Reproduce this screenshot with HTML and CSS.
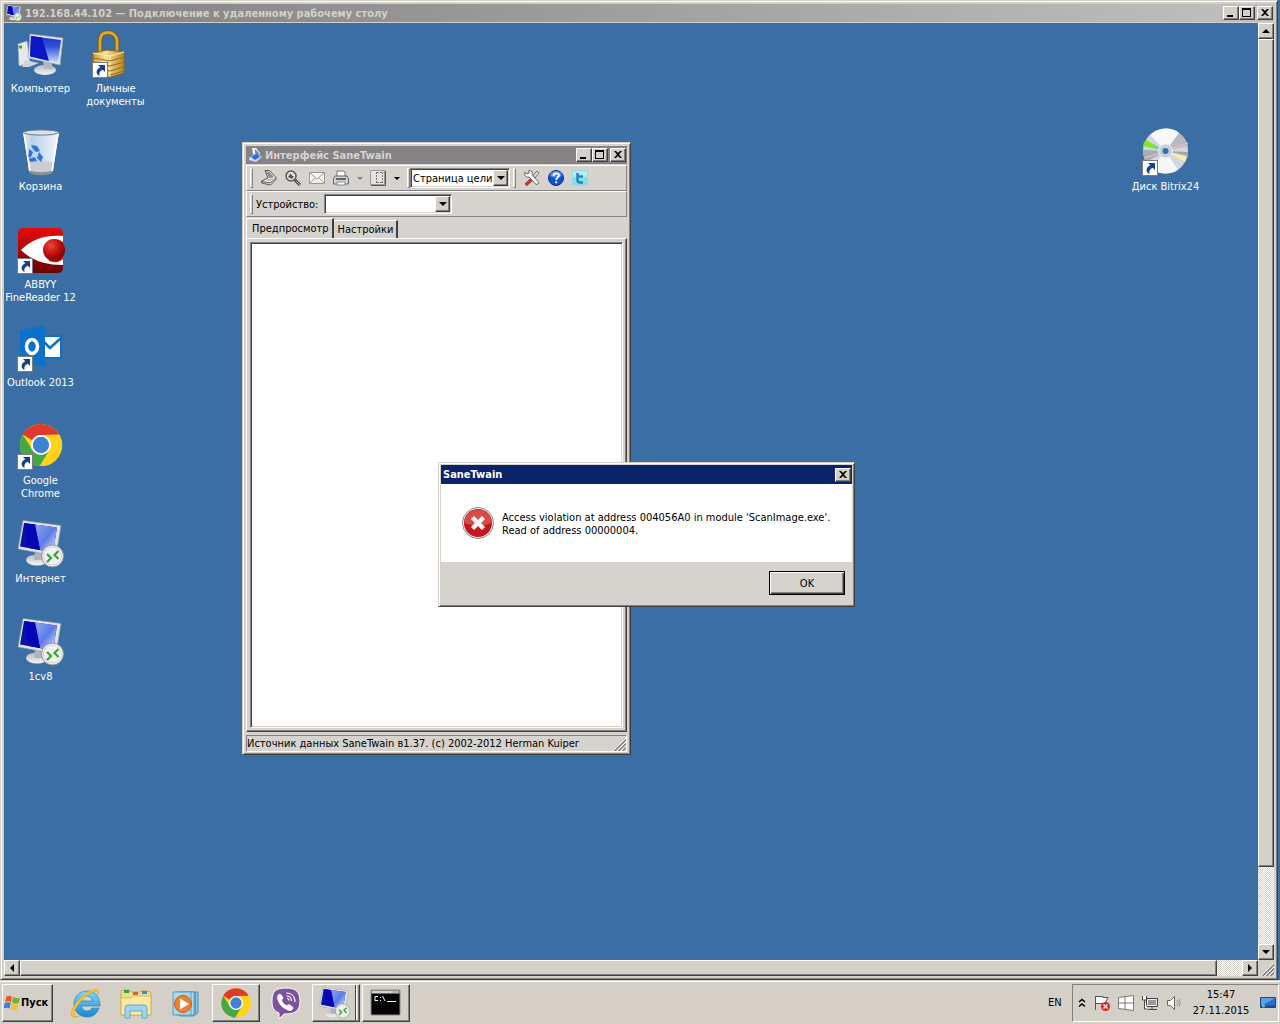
FILE: index.html
```
<!DOCTYPE html>
<html lang="ru">
<head>
    <meta charset="UTF-8">
    <meta name="viewport" content="width=device-width, initial-scale=1.0">
    <title>192.168.44.102 — Подключение к удаленному рабочему столу</title>
    <link rel="stylesheet" href="styles.css">
</head>
<body>
    <!-- shared drawings -->
    <svg class="defs" aria-hidden="true">
        <defs>
            <linearGradient id="screen" x1="0" y1="0" x2="1" y2="1">
                <stop offset="0" stop-color="#8ea6f4"/>
                <stop offset=".5" stop-color="#5d7be6"/>
                <stop offset="1" stop-color="#e6eeff"/>
            </linearGradient>
            <linearGradient id="screenV" x1="0" y1="1" x2="0" y2="0">
                <stop offset="0" stop-color="#c9d9fb"/>
                <stop offset=".6" stop-color="#2f52d8"/>
                <stop offset="1" stop-color="#1c36c8"/>
            </linearGradient>
            <linearGradient id="gold" x1="0" y1="0" x2="1" y2="0">
                <stop offset="0" stop-color="#c89a3a"/>
                <stop offset=".4" stop-color="#f7e29a"/>
                <stop offset="1" stop-color="#b8842a"/>
            </linearGradient>
            <linearGradient id="abbyy" x1="0" y1="0" x2="0" y2="1">
                <stop offset="0" stop-color="#e80a0a"/>
                <stop offset="1" stop-color="#6a0404"/>
            </linearGradient>
            <radialGradient id="ball" cx=".35" cy=".3" r=".8">
                <stop offset="0" stop-color="#ee4438"/>
                <stop offset=".5" stop-color="#c01010"/>
                <stop offset="1" stop-color="#6a0000"/>
            </radialGradient>
            <linearGradient id="bin" x1="0" y1="0" x2="1" y2="0">
                <stop offset="0" stop-color="#f2f7fc"/>
                <stop offset=".25" stop-color="#c0d8f0"/>
                <stop offset=".7" stop-color="#e6f1fb"/>
                <stop offset="1" stop-color="#ffffff"/>
            </linearGradient>
            <linearGradient id="stand" x1="0" y1="0" x2="0" y2="1">
                <stop offset="0" stop-color="#b8bcc0"/>
                <stop offset="1" stop-color="#f4f4f4"/>
            </linearGradient>
            <linearGradient id="ie" x1="0" y1="0" x2="0" y2="1">
                <stop offset="0" stop-color="#7fd8fa"/>
                <stop offset="1" stop-color="#1c86d0"/>
            </linearGradient>
            <symbol id="shortcut" viewBox="0 0 16 16">
                <rect x=".5" y=".5" width="15" height="15" fill="#fff" stroke="#7d7d7d"/>
                <path d="M6 3h7v7l-2.200-2.200c-3 1.200-3.800 3-3.300 6.200-3.500-1.500-4.500-6 .8-8.700z" fill="#15428b"/>
            </symbol>
            <symbol id="monitor" viewBox="0 0 48 48">
                <ellipse cx="20" cy="40" rx="11" ry="5.500" fill="url(#stand)"/>
                <path d="M18 30l8 2-1 8h-8z" fill="#aeb4ba"/>
                <path d="M6 .5L44 5.500 39 36 1 29z" fill="#e2e6ea" stroke="#8e99a5" stroke-width=".7"/>
                <path d="M7 3L40 7.500 36 32.500 3 26.500z" fill="#0a12a8"/>
                <path d="M18 4.500L40 7.500 36 32.500 23 30z" fill="url(#screen)"/>
                <path d="M7 3l11 1.500L23 30l-10-1.800L9 15z" fill="#0606b8"/>
            </symbol>
            <symbol id="rdp" viewBox="0 0 48 48">
                <use href="#monitor" width="48" height="48"/>
                <circle cx="35.500" cy="36" r="11" fill="#f1f1f1" stroke="#8e9296"/>
                <circle cx="35.500" cy="36" r="9" fill="none" stroke="#d5d5d5"/>
                <path d="M30 34l4 4-4 4M41.500 31l-4 4 4 4" fill="none" stroke="#3aa52d" stroke-width="2.200"/>
            </symbol>
            <symbol id="chrome" viewBox="0 0 48 48">
                <circle cx="24" cy="24" r="22" fill="#ffd21c"/>
                <path d="M4.900 13A22 22 0 0 1 43 13L24 13.500a10.500 10.500 0 0 0-9.300 5.500z" fill="#de3a2e"/>
                <path d="M4.900 13A22 22 0 0 0 22.500 46L33 29.500 24 34.500l-9.100-5.200z" fill="#45a848"/>
                <path d="M24 13.500h19.300A22 22 0 0 1 23 46l10.100-16.700z" fill="#ffd21c"/>
                <circle cx="24" cy="24" r="10.500" fill="#fff"/>
                <circle cx="24" cy="24" r="8.500" fill="#3f82d2"/>
            </symbol>
            <symbol id="grip" viewBox="0 0 14 14">
                <path d="M2 14L14 2M6 14l8-8M10 14l4-4" stroke="#808080" stroke-width="2"/>
                <path d="M1 14L14 1M5 14l9-9M9 14l5-5" stroke="#fff"/>
            </symbol>
            <symbol id="min" viewBox="0 0 12 10"><path d="M2 7h6v2H2z"/></symbol>
            <symbol id="max" viewBox="0 0 12 10"><path d="M1 0h9v9H1zM2 2v6h7V2z" fill-rule="evenodd"/></symbol>
            <symbol id="close" viewBox="0 0 12 10"><path d="M2 1h2l2 2 2-2h2L7 4.500 10 8H8L6 6 4 8H2l3-3.500z"/></symbol>
        </defs>
    </svg>

    <main class="remote frame">
        <header class="titlebar titlebar-remote">
            <svg class="title-icon" viewBox="0 0 48 48"><use href="#rdp"/></svg>
            <h1 class="title">192.168.44.102 — Подключение к удаленному рабочему столу</h1>
            <div class="title-btns">
                <button class="sys-btn" aria-label="Свернуть"><svg><use href="#min"/></svg></button>
                <button class="sys-btn" aria-label="Развернуть"><svg><use href="#max"/></svg></button>
                <button class="sys-btn sys-close" aria-label="Закрыть"><svg><use href="#close"/></svg></button>
            </div>
        </header>

        <div class="viewport">
            <section class="desktop">
                <div class="icons">
                    <a href="#" class="icon">
                        <svg class="icon-img" viewBox="0 0 48 48">
                            <path d="M1 14l9-3 3 22-11 3z" fill="#e6e8ea" stroke="#a0a8b0" stroke-width=".6"/>
                            <path d="M8 30l14 3-10 4H5z" fill="#cfd4d8"/>
                            <circle cx="3.500" cy="17" r="1.800" fill="#34b22c"/>
                            <ellipse cx="28" cy="40" rx="11" ry="5" fill="url(#stand)"/>
                            <path d="M26 30h8l2 9h-9z" fill="#b4b9be"/>
                            <path d="M13 4l33 4-3 27-32-7z" fill="#e2e6ea" stroke="#9aa4ae" stroke-width=".7"/>
                            <path d="M14 6l30 4-3 22.500L13 26.500z" fill="url(#screenV)"/>
                            <path d="M14 6l11 1.500L32 31l-19-4.500z" fill="#0b16c4"/>
                        </svg>
                        <span class="icon-name">Компьютер</span>
                    </a>
                    <a href="#" class="icon">
                        <svg class="icon-img" viewBox="0 0 48 48">
                            <path d="M8 24V12C8 5 11 2.500 15.500 2.500S25 5 25 12v12" fill="none" stroke="#7a5812" stroke-width="4.500"/>
                            <path d="M8 24V12C8 5 11 2.500 15.500 2.500S25 5 25 12v12" fill="none" stroke="#dcaa30" stroke-width="2.800"/>
                            <path d="M1 23l14-3 17 2v21l-14 4-17-3z" fill="url(#gold)" stroke="#94680f"/>
                            <path d="M1 23l17 3 14-4M18 26v21" fill="none" stroke="#fff1b8"/>
                            <path d="M1 28l17 3 14-4M1 33l17 3 14-4M1 38l17 3 14-4M18 45l14-4" fill="none" stroke="#9a6d14" stroke-width="1.200"/>
                            <use href="#shortcut" y="32" width="16" height="16"/>
                        </svg>
                        <span class="icon-name">Личные документы</span>
                    </a>
                    <a href="#" class="icon">
                        <svg class="icon-img" viewBox="0 0 48 48">
                            <path d="M6 4h36l-6 39c-4 4-20 4-24 0z" fill="url(#bin)" opacity=".93"/>
                            <path d="M11 36c6-5 19-5 26 0l-1 7c-4 4-20 4-24 0z" fill="#c9ced2"/>
                            <path d="M12 42c6 3 18 3 24 0l-.5 3c-5 3-18 3-23 0z" fill="#8a9095"/>
                            <ellipse cx="24" cy="4.500" rx="17.500" ry="2.600" fill="#d6e3ef" stroke="#6f7a84"/>
                            <path d="M14 17l6 1 3 5-4 1-3-3zM12 21l4 3-2 5-3 1zM11 31l7-2 2 4-6 1zM22 24l4 5-2 5-4-4z" fill="#2f74d6"/>
                            <path d="M7 6l6 37M41 6l-6 37" stroke="#fff" stroke-width="1.500"/>
                        </svg>
                        <span class="icon-name">Корзина</span>
                    </a>
                    <a href="#" class="icon">
                        <svg class="icon-img" viewBox="0 0 48 48">
                            <rect x="1" y="2" width="45" height="45" rx="5" fill="url(#abbyy)"/>
                            <path d="M4 24C15 13 29 9 46 10v29C29 39 15 35 4 24z" fill="#fff"/>
                            <path d="M32 14q9-2 14 2v17q-5 5-14 2z" fill="#d80d0d"/>
                            <path d="M32 13q-8 3-8 11t8 11z" fill="#fff"/>
                            <circle cx="37" cy="24" r="11" fill="url(#ball)"/>
                            <use href="#shortcut" y="32" width="16" height="16"/>
                        </svg>
                        <span class="icon-name">ABBYY FineReader 12</span>
                    </a>
                    <a href="#" class="icon">
                        <svg class="icon-img" viewBox="0 0 48 48">
                            <rect x="22" y="11" width="23" height="24" rx="2" fill="#0a72c8"/>
                            <path d="M27 13h16v20H27z" fill="#fff"/>
                            <path d="M27 18l6 6 11-10" fill="none" stroke="#0a72c8" stroke-width="2.500"/>
                            <path d="M3 6l25-4v41L3 39z" fill="#0a72c8"/>
                            <ellipse cx="15" cy="22.500" rx="5.500" ry="7" fill="none" stroke="#fff" stroke-width="3.500"/>
                            <use href="#shortcut" y="32" width="16" height="16"/>
                        </svg>
                        <span class="icon-name">Outlook 2013</span>
                    </a>
                    <a href="#" class="icon">
                        <svg class="icon-img" viewBox="0 0 48 48">
                            <use href="#chrome" x="1" width="46" height="46"/>
                            <use href="#shortcut" y="32" width="16" height="16"/>
                        </svg>
                        <span class="icon-name">Google Chrome</span>
                    </a>
                    <a href="#" class="icon">
                        <svg class="icon-img" viewBox="0 0 48 48"><use href="#rdp"/></svg>
                        <span class="icon-name">Интернет</span>
                    </a>
                    <a href="#" class="icon">
                        <svg class="icon-img" viewBox="0 0 48 48"><use href="#rdp"/></svg>
                        <span class="icon-name">1cv8</span>
                    </a>
                    <a href="#" class="icon icon-disk">
                        <svg class="icon-img" viewBox="0 0 48 48">
                            <circle cx="23.500" cy="23" r="22.500" fill="#d4d6d9"/>
                            <path d="M23.500 23L8 7Q15 .5 24 .5T37 5z" fill="#f8f8fa"/>
                            <path d="M23.500 23L36 42Q30 46 22 45.500T9 41z" fill="#f6f6f8"/>
                            <path d="M23.500 23L37 5q7 5 9 13z" fill="#b9babf"/>
                            <path d="M23.500 23L1 22q0 7 3 12z" fill="#a9abb0"/>
                            <path d="M23.500 23L46 24q0 5-1 7z" fill="#a4a5aa"/>
                            <path d="M23.500 23L4 12q-3 3-3 6z" fill="#7dea1e"/>
                            <path d="M23.500 23L12 16.500l-1 3z" fill="#6dc6c6"/>
                            <path d="M23.500 23l21.500 5-2 6z" fill="#f4eeb0"/>
                            <path d="M23.500 23L46 15M23.500 23L3 30" stroke="#e3c2dc" stroke-width="1.200"/>
                            <circle cx="23.500" cy="23" r="7" fill="#c3d0de" stroke="#eef2f5"/>
                            <circle cx="23.500" cy="23" r="3" fill="#3a6ea5"/>
                            <use href="#shortcut" y="32" width="16" height="16"/>
                        </svg>
                        <span class="icon-name">Диск Bitrix24</span>
                    </a>
                </div>

                <section class="window frame">
                    <header class="titlebar">
                        <svg class="title-icon" viewBox="0 0 16 16">
                            <path d="M4 1h4l4 5-2 4-5-3z" fill="#f2f4f8"/>
                            <path d="M7 2l4 4-1 3-3-2z" fill="#7d8aa0"/>
                            <path d="M1 11l7-5 6 4-6 5-7-2z" fill="#c9dcfa"/>
                            <path d="M3 10l6-4 3 4-5 3z" fill="#2f6ee0"/>
                        </svg>
                        <h2 class="title">Интерфейс SaneTwain</h2>
                        <div class="title-btns">
                            <button class="sys-btn" aria-label="Свернуть"><svg><use href="#min"/></svg></button>
                            <button class="sys-btn" aria-label="Развернуть"><svg><use href="#max"/></svg></button>
                            <button class="sys-btn sys-close" aria-label="Закрыть"><svg><use href="#close"/></svg></button>
                        </div>
                    </header>
                    <div class="toolbars">
                        <div class="toolbar">
                            <span class="handle"></span>
                            <button class="tool" aria-label="Сканировать">
                                <svg viewBox="0 0 16 16">
                                    <path d="M4 .5h4.500l6.500 7v2L9.500 15 .5 13v-2L7 8z" fill="#e9e9e9" stroke="#555"/>
                                    <path d="M5 1.500h3l5 6-5 .5z" fill="#8c8c8c"/>
                                    <path d="M1 11.500l8 1.500 6-5" fill="none" stroke="#555"/>
                                    <path d="M5 10l4-1.500 3 .5-3.500 2.500z" fill="#bbb"/>
                                </svg>
                            </button>
                            <button class="tool" aria-label="Просмотр">
                                <svg viewBox="0 0 16 16">
                                    <circle cx="6" cy="6" r="5" fill="#ddd" stroke="#555" stroke-width="1.500"/>
                                    <path d="M3 7l3-4 3 3-2 3z" fill="#555"/>
                                    <path d="M6 2l1 3 3 1" stroke="#fff" fill="none"/>
                                    <path d="M10 10l5 5" stroke="#444" stroke-width="3"/>
                                    <path d="M11 11l4 4" stroke="#bbb"/>
                                </svg>
                            </button>
                            <button class="tool" aria-label="Отправить">
                                <svg viewBox="0 0 16 16">
                                    <path d="M.5 2.500h15v11H.5z" fill="#f3f3f3" stroke="#999"/>
                                    <path d="M1 3l7 6 7-6M1 13l5-5M15 13l-5-5" fill="none" stroke="#999"/>
                                </svg>
                            </button>
                            <button class="tool" aria-label="Печать">
                                <svg viewBox="0 0 16 16">
                                    <path d="M4 7V1h7l1 2v4z" fill="#fff" stroke="#777"/>
                                    <path d="M2 6h12l1.500 3v5H.5V9z" fill="#d2d2d2" stroke="#666"/>
                                    <path d="M3 8h10v2H3z" fill="#666"/>
                                    <path d="M4 12h8v3H4z" fill="#fff" stroke="#888"/>
                                </svg>
                            </button>
                            <button class="drop" aria-label="Параметры печати"><span class="tri tri-down tri-off"></span></button>
                            <button class="tool" aria-label="Формат страницы">
                                <svg viewBox="0 0 16 16">
                                    <path d="M.5.500h14v14H.5z" fill="#e6e4e0" stroke="#999"/>
                                    <path d="M1 15.500h14.500V1" fill="none" stroke="#555"/>
                                    <path d="M6.500 2v11M12.500 2v11M7 2.500h5M7 12.500h5" fill="none" stroke="#777" stroke-dasharray="2 1"/>
                                </svg>
                            </button>
                            <button class="drop" aria-label="Выбор формата"><span class="tri tri-down"></span></button>
                            <span class="handle"></span>
                            <div class="combo combo-page">
                                <select aria-label="Масштаб"><option>Страница целиком</option></select>
                                <span class="combo-btn"><span class="tri tri-down"></span></span>
                            </div>
                            <span class="handle"></span>
                            <button class="tool" aria-label="Настройка">
                                <svg viewBox="0 0 16 16">
                                    <path d="M13 1l2 2-6 7-2-2z" fill="#ddd" stroke="#555" stroke-width=".8"/>
                                    <path d="M1 14l6-6 2 2-6 5.500z" fill="#d23a2e" stroke="#7c201a" stroke-width=".8"/>
                                    <path d="M1 2l2 2 2-1V.500c3 0 4 2 3 4l6 7c2 2-1 4-3 2L5 7C2 8 0 6 1 2z" fill="#f6f6f6" stroke="#555" stroke-width=".9"/>
                                </svg>
                            </button>
                            <button class="tool" aria-label="Справка">
                                <svg viewBox="0 0 16 16">
                                    <circle cx="8" cy="8" r="7.500" fill="#1450cc" stroke="#0a2f90"/>
                                    <path d="M2 6a6 5 0 0 1 12 0q-6 3-12 0z" fill="#5b8eea"/>
                                    <path d="M5.500 6c0-3.500 5.500-3.500 5.500-.5C11 7.500 8.200 7.500 8.200 10M8.200 11.200v2" fill="none" stroke="#fff" stroke-width="1.800"/>
                                </svg>
                            </button>
                            <button class="tool" aria-label="Twitter">
                                <svg viewBox="0 0 16 16">
                                    <rect width="16" height="16" rx="2" fill="#8cdcf0"/>
                                    <rect x="1" y="1" width="14" height="6" rx="1" fill="#b4ecf8"/>
                                    <path d="M5.500 3v7q0 2.500 2.500 2.500h3M5.500 6.500H11" fill="none" stroke="#2388b4" stroke-width="2.600"/>
                                </svg>
                            </button>
                        </div>
                        <div class="toolbar">
                            <span class="handle"></span>
                            <label for="device">Устройство:</label>
                            <div class="combo combo-device">
                                <select id="device"><option></option></select>
                                <span class="combo-btn"><span class="tri tri-down"></span></span>
                            </div>
                        </div>
                    </div>
                    <div class="tabs">
                        <button class="tab tab-active">Предпросмотр</button>
                        <button class="tab">Настройки</button>
                    </div>
                    <div class="page">
                        <div class="preview"></div>
                    </div>
                    <footer class="status">
                        <span>Источник данных SaneTwain в1.37. (c) 2002-2012 Herman Kuiper</span>
                        <svg class="grip"><use href="#grip"/></svg>
                    </footer>
                </section>

                <section class="dialog frame" role="alertdialog" aria-labelledby="dialog-title">
                    <header class="titlebar titlebar-active">
                        <h2 class="title" id="dialog-title">SaneTwain</h2>
                        <button class="sys-btn" aria-label="Закрыть"><svg><use href="#close"/></svg></button>
                    </header>
                    <div class="message">
                        <svg class="error-icon" viewBox="0 0 32 32">
                            <circle cx="16" cy="16" r="15.500" fill="#f4f4f4" stroke="#8c8c8c"/>
                            <circle cx="16" cy="16" r="14" fill="#c4161c"/>
                            <path d="M2.500 16a13.500 13.500 0 0 1 27 0q-13 5-27 0z" fill="#d94a4a"/>
                            <path d="M10.500 10.500l11 11M21.500 10.500l-11 11" stroke="#f4f4f4" stroke-width="4.500"/>
                        </svg>
                        <p>Access violation at address 004056A0 in module 'ScanImage.exe'.<br>Read of address 00000004.</p>
                    </div>
                    <div class="dialog-btns">
                        <button class="ok-btn">OK</button>
                    </div>
                </section>
            </section>

            <div class="scroll scroll-v">
                <button class="scroll-btn" aria-label="Вверх"><span class="tri tri-up"></span></button>
                <div class="track"><div class="thumb"></div></div>
                <button class="scroll-btn" aria-label="Вниз"><span class="tri tri-down"></span></button>
            </div>
            <div class="scroll scroll-h">
                <button class="scroll-btn" aria-label="Влево"><span class="tri tri-left"></span></button>
                <div class="track"><div class="thumb"></div></div>
                <button class="scroll-btn" aria-label="Вправо"><span class="tri tri-right"></span></button>
            </div>
            <div class="corner"><svg class="grip"><use href="#grip"/></svg></div>
        </div>
    </main>

    <nav class="taskbar">
        <button class="start">
            <svg viewBox="0 0 16 16">
                <path d="M2.500 1.500Q5 0 8 1.500L7 7Q4 5.500 1 7z" fill="#e8562a"/>
                <path d="M9 2q3.500 2 7 .5L14.500 8Q11 9.500 8 7.500z" fill="#6fb52c"/>
                <path d="M.8 8Q4 6.500 6.800 8L5.500 13.500Q3 12-.5 13.500z" fill="#3b7fd6"/>
                <path d="M7.800 8.500q3.200 2 6.500.5l-1.300 5.500q-3.500 1.500-6.500-.5z" fill="#f6c22c"/>
            </svg>
            Пуск
        </button>
        <div class="tasks">
            <button class="task" aria-label="Internet Explorer">
                <svg viewBox="0 0 32 32">
                    <path d="M17 4C9 4 4 10 4 17s5 13 13 13c6 0 10-3 12-9h-7c-1 2-3 3-5 3-3 0-5-2-5.500-5H30C30 9 25 4 17 4zM11.500 14c.5-3 2.500-5 5.500-5s5 2 5.500 5z" fill="url(#ie)" stroke="#1a78c0" stroke-width=".6"/>
                    <path d="M28 7c2-6-3-6-10-2C8 11-1 24 2 29c1 2 4 2 7 0-3 1-5 0-5-2 0-5 7-15 15-20 5-3 9-4 9 0z" fill="#f6c62c" stroke="#d89a14" stroke-width=".5"/>
                </svg>
            </button>
            <button class="task" aria-label="Проводник">
                <svg viewBox="0 0 32 32">
                    <path d="M1 5q0-2 2-2h6l2 2h9l1-1h7q3 0 3 3v21H1z" fill="#f1dc8c" stroke="#c9a645"/>
                    <path d="M4 3h5v3H4z" fill="#3aa03c"/><path d="M13 5h5v3h-5z" fill="#c8663c"/><path d="M22 4h5v3h-5z" fill="#3c8cc8"/>
                    <path d="M1 11h10l2-2h18v19H1z" fill="#faeaa6" stroke="#d8b95c"/>
                    <path d="M5 31V21q0-3 3-3h16q3 0 3 3v10h-5v-7H10v7z" fill="#a3d6ee" stroke="#5ba8cc"/>
                </svg>
            </button>
            <button class="task" aria-label="Проигрыватель">
                <svg viewBox="0 0 32 32">
                    <path d="M10 5h18v21l-4 3H10z" fill="#8fc6e2" stroke="#4b94bc"/>
                    <path d="M6 5h18v23H6zM25.500 5v22" fill="#b3ddf0" stroke="#4b94bc"/>
                    <path d="M3 5h18v23H3z" fill="#a9d8ee" stroke="#5a9fc4"/>
                    <circle cx="13" cy="17" r="8.500" fill="#f0812a" stroke="#c35c12"/>
                    <path d="M10 11.500l9 5.500-9 5.500z" fill="#fff"/>
                </svg>
            </button>
            <button class="task task-open" aria-label="Google Chrome"><svg viewBox="0 0 48 48"><use href="#chrome"/></svg></button>
            <button class="task" aria-label="Viber">
                <svg viewBox="0 0 32 32">
                    <path d="M16 1C6 1 2 4 2 14c0 7 2 10 7 12v6l5-5h2c10 0 14-4 14-13S26 1 16 1z" fill="#7c529e" stroke="#fff"/>
                    <path d="M9 7c-3 2-2 5 0 9s7 7 11 8c2 0 4-3 3-4l-4-3c-1 0-2 2-3 1-2-1-4-3-4-5 0-1 2-1 1-3-1-1-2-4-4-3z" fill="#fff"/>
                    <path d="M16 6c5 0 9 3 9 9M16.500 9c3 0 5 2 5 5M17 11.500q2 0 2 2" fill="none" stroke="#fff" stroke-width="1.200"/>
                </svg>
            </button>
            <button class="task task-open task-stack" aria-label="Удаленный рабочий стол"><svg viewBox="0 0 48 48"><use href="#rdp"/></svg></button>
            <button class="task task-open" aria-label="Командная строка">
                <svg viewBox="0 0 32 32">
                    <path d="M1 3h29v25H1z" fill="#050505" stroke="#888"/>
                    <path d="M1.500 3.500h28v3h-28z" fill="#cfd3d6"/>
                    <path d="M23 5h1M25.500 5h1M28 5h1" stroke="#444"/>
                    <path d="M8 9.500H5v4h3M10.500 10v1M10.500 13v1M12.500 9l2.500 5M17 14.500h9" fill="none" stroke="#fff"/>
                </svg>
            </button>
        </div>
        <span class="lang">EN</span>
        <div class="tray">
            <button class="tray-btn tray-more" aria-label="Показать скрытые значки">
                <svg viewBox="0 0 8 10"><path d="M1 4l3-2.500L7 4M1 8.500L4 6l3 2.500" fill="none" stroke="#000" stroke-width="1.500"/></svg>
            </button>
            <button class="tray-btn" aria-label="Центр поддержки">
                <svg viewBox="0 0 16 16">
                    <path d="M1.500 1v14M2 1.500h7v1h5l-2 3.500 2 3.500H8v-1H2" fill="#fafafa" stroke="#555"/>
                    <circle cx="11.500" cy="11.500" r="4.500" fill="#d62a22"/>
                    <path d="M9.500 9.500l4 4M13.500 9.500l-4 4" stroke="#fff" stroke-width="1.300"/>
                </svg>
            </button>
            <button class="tray-btn" aria-label="Windows">
                <svg viewBox="0 0 16 16">
                    <path d="M.5 2.500l15-2v15l-15-2z" fill="#fff" stroke="#777"/>
                    <path d="M7 1.500v13M.5 8h15" stroke="#777"/>
                </svg>
            </button>
            <button class="tray-btn" aria-label="Сеть">
                <svg viewBox="0 0 16 16">
                    <path d="M4.500 3.500h11v8h-11z" fill="#999" stroke="#444"/>
                    <path d="M5.500 4.500h9v6h-9z" fill="none" stroke="#eee"/>
                    <path d="M6 14.500h9M10 12v2" stroke="#444"/>
                    <path d="M.5 1v4h4V1M2.500 5v9h3" fill="#fff" stroke="#444"/>
                </svg>
            </button>
            <button class="tray-btn" aria-label="Громкость">
                <svg viewBox="0 0 16 16">
                    <path d="M1.500 5.500h3l4-4v13l-4-4h-3z" fill="#fff" stroke="#666"/>
                    <path d="M11 5q2 3 0 6M13 4q2.500 4 0 8" fill="none" stroke="#999"/>
                </svg>
            </button>
            <time class="clock" datetime="2015-11-27T15:47">15:47<br>27.11.2015</time>
            <button class="tray-btn" aria-label="Свернуть все окна">
                <svg viewBox="0 0 16 16">
                    <path d="M.5 2.500h15v10H.5z" fill="#2a6fd0" stroke="#24466e"/>
                    <path d="M1 3h14L1 11z" fill="#5f9fe8"/>
                    <path d="M1 10.500h14v2H1z" fill="#234a80"/>
                    <circle cx="3.500" cy="11" r="1.500" fill="#62c8d8"/>
                </svg>
            </button>
        </div>
    </nav>
</body>
</html>
```
FILE: styles.css
```
*{
    padding: 0;
    margin: 0;
    box-sizing: border-box;
}
body{
    display: flex;
    flex-direction: column;
    height: 100vh;
    overflow: hidden;
    background: #3a6ea5;
    color: #000;
    font: 11px/13px Tahoma, "DejaVu Sans Condensed", "DejaVu Sans", sans-serif;
}
button, select{
    font: inherit;
    color: inherit;
    border: 0;
    background: none;
    border-radius: 0;
    appearance: none;
}
svg{
    display: block;
}
.defs{
    position: absolute;
    width: 0;
    height: 0;
}

/* window frame */
.frame{
    display: flex;
    flex-direction: column;
    background: #d6d3ce;
    border: 1px solid #404040;
    border-top-color: #d4d0c8;
    border-left-color: #d4d0c8;
    box-shadow: inset 1px 1px #fff, inset -1px -1px #808080;
    padding: 3px;
}
.titlebar{
    display: flex;
    align-items: center;
    height: 18px;
    flex: none;
    padding: 0 1px 0 2px;
    gap: 1px;
    background: #848284;
    color: #d6d3ce;
}
.titlebar-remote{
    gap: 3px;
    background: linear-gradient(to right, #808080, #c0c0c0);
    color: #d4d0c8;
}
.titlebar-active{
    background: #0a246a;
    color: #fff;
}
.title{
    flex: 1;
    font-size: 11px;
    font-weight: bold;
    white-space: nowrap;
}
.title-icon{
    width: 16px;
    height: 16px;
}
.title-btns{
    display: flex;
}
.sys-btn, .scroll-btn, .combo-btn{
    display: flex;
    align-items: center;
    justify-content: center;
    background: #d4d0c8;
    border: 1px solid #404040;
    border-top-color: #fff;
    border-left-color: #fff;
    box-shadow: inset -1px -1px #808080;
}
.sys-btn{
    width: 16px;
    height: 14px;
}
.sys-btn svg{
    width: 12px;
    height: 10px;
}
.sys-close{
    margin-left: 2px;
}

/* remote desktop window */
.remote{
    flex: 1;
    min-height: 0;
    margin-right: 2px;
    background: #d4d0c8;
}
.viewport{
    flex: 1;
    min-height: 0;
    display: grid;
    grid-template-rows: 1fr 16px;
    grid-template-columns: 1fr 16px;
    padding-top: 1px;
}
.desktop{
    position: relative;
    overflow: hidden;
    min-height: 0;
    background: #3a6ea5;
}
.icons{
    display: grid;
    grid-template-columns: repeat(16, 75px);
    grid-template-rows: repeat(7, 98px);
    grid-auto-flow: column;
    padding-top: 7px;
    margin-left: -1px;
}
.icon{
    display: flex;
    flex-direction: column;
    align-items: center;
    gap: 4px;
    grid-column: 1;
    color: #fff;
    text-align: center;
    text-decoration: none;
}
.icon:nth-child(2){
    grid-column: 2;
    grid-row: 1;
}
.icon-disk{
    grid-column: 16;
    grid-row: 2;
}
.icon-img{
    width: 48px;
    height: 48px;
}

/* scroll bars */
.scroll{
    display: flex;
}
.scroll-v{
    flex-direction: column;
}
.scroll-btn{
    width: 16px;
    height: 16px;
    flex: none;
}
.track{
    flex: 1;
    background: repeating-conic-gradient(#fff 0 25%, #d4d0c8 0 50%) 0 0 / 2px 2px;
}
.thumb{
    background: #d4d0c8;
    border: 1px solid #404040;
    border-top-color: #fff;
    border-left-color: #fff;
    box-shadow: inset -1px -1px #808080;
}
.scroll-v .thumb{
    height: calc(100% - 77px);
}
.scroll-h .thumb{
    width: calc(100% - 25px);
    height: 100%;
}
.corner{
    display: flex;
    align-items: flex-end;
    justify-content: flex-end;
}
.grip{
    width: 14px;
    height: 14px;
}
.tri{
    border: 3px solid transparent;
}
.tri-up{
    border-top: 0;
    border-bottom: 4px solid #000;
    border-left-width: 4px;
    border-right-width: 4px;
}
.tri-down{
    border-bottom: 0;
    border-top: 4px solid #000;
    border-left-width: 4px;
    border-right-width: 4px;
}
.tri-left{
    border-left: 0;
    border-right: 4px solid #000;
    border-top-width: 4px;
    border-bottom-width: 4px;
}
.tri-right{
    border-right: 0;
    border-left: 4px solid #000;
    border-top-width: 4px;
    border-bottom-width: 4px;
}
.tri-off{
    border-top-color: #848284;
}

/* SaneTwain */
.window{
    position: absolute;
    left: 238px;
    top: 119px;
    width: 389px;
    height: 613px;
    padding-bottom: 2px;
}
.toolbars{
    margin-top: 1px;
}
.toolbar{
    display: flex;
    align-items: center;
    height: 26px;
    padding-left: 3px;
    border: 1px solid #848284;
    border-left-color: #fff;
    border-top-color: #fff;
}
.handle{
    width: 3px;
    height: 20px;
    border: 1px solid #848284;
    border-top-color: #fff;
    border-left-color: #fff;
}
.tool{
    display: flex;
    align-items: center;
    justify-content: center;
    width: 24px;
    height: 22px;
}
.tool svg{
    width: 16px;
    height: 16px;
}
.handle + .tool{
    margin-left: 4px;
}
.drop{
    display: flex;
    justify-content: center;
    width: 13px;
}
.drop .tri{
    border-width: 3px 3px 0;
}
.drop + .handle{
    margin-left: 4px;
}
.combo{
    display: flex;
    height: 20px;
    padding: 1px;
    background: #fff;
    border: 1px solid #fff;
    border-top-color: #848284;
    border-left-color: #848284;
    box-shadow: inset 1px 1px #404040, inset -1px -1px #d6d3ce;
}
.combo select{
    flex: 1;
    min-width: 0;
    padding-left: 1px;
    overflow: hidden;
    text-overflow: clip;
}
.combo-btn{
    width: 15px;
}
.combo-page{
    width: 100px;
    margin-right: 3px;
}
.combo-device{
    width: 128px;
}
.toolbar label{
    width: 71px;
    padding-left: 3px;
    white-space: nowrap;
}
.tabs{
    display: flex;
    align-items: flex-end;
    height: 21px;
    padding-top: 1px;
}
.tab{
    height: 18px;
    padding: 0 3px;
    border-top: 1px solid #fff;
    border-right: 2px solid #404040;
    white-space: nowrap;
}
.tab-active{
    height: 20px;
    padding: 0 4px 1px 5px;
    border-left: 1px solid #fff;
    border-right: 2px solid #404040;
}
.page{
    flex: 1;
    display: flex;
    padding: 3px;
    border: 1px solid #404040;
    border-top-color: #fff;
    border-left-color: #fff;
    box-shadow: inset -1px -1px #848284;
}
.preview{
    flex: 1;
    background: #fff;
    border: 1px solid #fff;
    border-top-color: #848284;
    border-left-color: #848284;
    box-shadow: inset 1px 1px #404040, inset -1px -1px #d6d3ce;
}
.status{
    display: flex;
    align-items: center;
    justify-content: space-between;
    height: 17px;
    margin-top: 3px;
    white-space: nowrap;
    border: 1px solid #fff;
    border-top-color: #848284;
    border-left-color: #848284;
}

/* error message */
.dialog{
    position: absolute;
    left: 434px;
    top: 439px;
    width: 417px;
    height: 145px;
    padding: 2px;
}
.dialog .titlebar{
    height: 19px;
}
.message{
    flex: 1;
    display: flex;
    gap: 8px;
    padding: 23px 21px;
    background: #fff;
}
.message p{
    padding-top: 4px;
    white-space: nowrap;
}
.error-icon{
    width: 32px;
    height: 32px;
    flex: none;
}
.dialog-btns{
    display: flex;
    justify-content: flex-end;
    padding: 9px 7px;
}
.ok-btn{
    width: 76px;
    height: 24px;
    border: 1px solid #000;
    box-shadow: inset 1px 1px #fff, inset -1px -1px #404040, inset -2px -2px #848284;
}

/* taskbar */
.taskbar{
    display: flex;
    align-items: center;
    height: 44px;
    flex: none;
    padding: 2px 1px 2px 2px;
    background: #d4d0c8;
    border-top: 1px solid #d4d0c8;
    box-shadow: inset 0 1px #fff;
}
.start, .task-open{
    border: 1px solid #404040;
    border-top-color: #fff;
    border-left-color: #fff;
    box-shadow: inset -1px -1px #808080;
}
.start{
    display: flex;
    align-items: center;
    gap: 1px;
    width: 51px;
    height: 38px;
    padding-left: 1px;
    font-weight: bold;
}
.start svg{
    width: 16px;
    height: 16px;
    flex: none;
}
.tasks{
    flex: 1;
    display: flex;
    gap: 2px;
    padding-left: 9px;
}
.task{
    display: flex;
    align-items: center;
    justify-content: center;
    width: 48px;
    height: 38px;
}
.task svg{
    width: 32px;
    height: 32px;
}
.task-stack{
    padding-right: 3px;
    box-shadow: inset -1px -1px #808080, inset -2px 0 #d4d0c8, inset -3px 0 #fff, inset -4px 0 #404040;
}
.lang{
    width: 24px;
}
.tray{
    display: flex;
    align-items: center;
    height: 38px;
    gap: 8px;
    padding: 0 2px 0 5px;
    border: 1px solid #fff;
    border-top-color: #808080;
    border-left-color: #808080;
}
.tray-btn svg{
    width: 16px;
    height: 16px;
}
.tray-more svg{
    width: 8px;
    height: 10px;
}
.clock{
    width: 62px;
    line-height: 16px;
    text-align: center;
}
```
